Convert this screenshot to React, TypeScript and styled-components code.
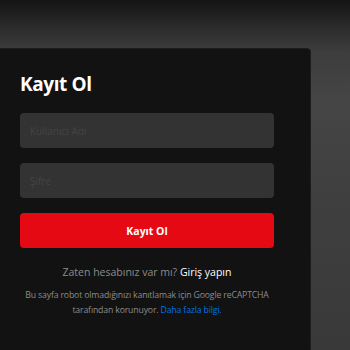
import React from 'react';
import styled, { createGlobalStyle } from 'styled-components';

const GlobalStyle = createGlobalStyle`
    html, body {
        margin: 0;
        padding: 0;
        height: 100%;
        background: #141414;
    }
    #root {
        height: 100%;
    }
`;

const Page = styled.div`
    display: flex;
    align-items: flex-start;
    height: 100%;
    overflow: hidden;
    box-sizing: border-box;
    padding-top: 48px;
    background: linear-gradient(to bottom, #141414 0px, #2c2c2c 28px, #3d3d3d 52px, #454545 100px, #3e3e3e 220px, #393939 100%);
    font-family: 'Open Sans', 'Noto Sans', sans-serif;
`;

const Card = styled.main`
    flex: 0 0 auto;
    width: 328px;
    margin-left: -17px;
    min-height: 320px;
    padding: 23px 36px 40px;
    box-sizing: border-box;
    background: #121212;
    border: 1px solid #1d1d1d;
    border-radius: 4px;
`;

const Title = styled.h1`
    margin: 0 0 17px;
    color: #fff;
    font-size: 19px;
    font-weight: 700;
    line-height: 24px;
    letter-spacing: -0.4px;
`;

const Form = styled.form`
    display: flex;
    flex-direction: column;
    gap: 15px;
`;

const Input = styled.input`
    height: 35px;
    padding: 0 10px;
    border: none;
    border-radius: 4px;
    background: #333;
    color: #fff;
    font-family: inherit;
    font-size: 10px;
    outline: none;

    &::placeholder {
        color: #444;
    }
`;

const Button = styled.button`
    height: 35px;
    border: none;
    border-radius: 4px;
    background: #e50914;
    color: #fff;
    font-family: inherit;
    font-size: 10.5px;
    font-weight: 700;
    cursor: pointer;
`;

const SignIn = styled.p`
    margin: 17px 0 0;
    text-align: center;
    color: #8c8c8c;
    font-size: 10.5px;
    line-height: 14px;

    a {
        color: #fff;
        text-decoration: none;
    }
`;

const Captcha = styled.p`
    margin: 9px -4px 0;
    text-align: center;
    color: #8c8c8c;
    font-size: 8.7px;
    line-height: 15px;
    letter-spacing: -0.15px;

    a {
        color: #0071eb;
        text-decoration: none;
    }
`;

export default function App(): React.ReactElement {
    return (
        <>
            <GlobalStyle />
            <Page>
                <Card>
                    <Title>Kayıt Ol</Title>
                    <Form onSubmit={(ev) => ev.preventDefault()}>
                        <Input type="text" placeholder="Kullanıcı Adı" />
                        <Input type="password" placeholder="Şifre" />
                        <Button type="submit">Kayıt Ol</Button>
                    </Form>
                    <SignIn>
                        Zaten hesabınız var mı? <a href="#">Giriş yapın</a>
                    </SignIn>
                    <Captcha>
                        Bu sayfa robot olmadığınızı kanıtlamak için Google reCAPTCHA tarafından korunuyor.{' '}
                        <a href="#">Daha fazla bilgi.</a>
                    </Captcha>
                </Card>
            </Page>
        </>
    );
}
